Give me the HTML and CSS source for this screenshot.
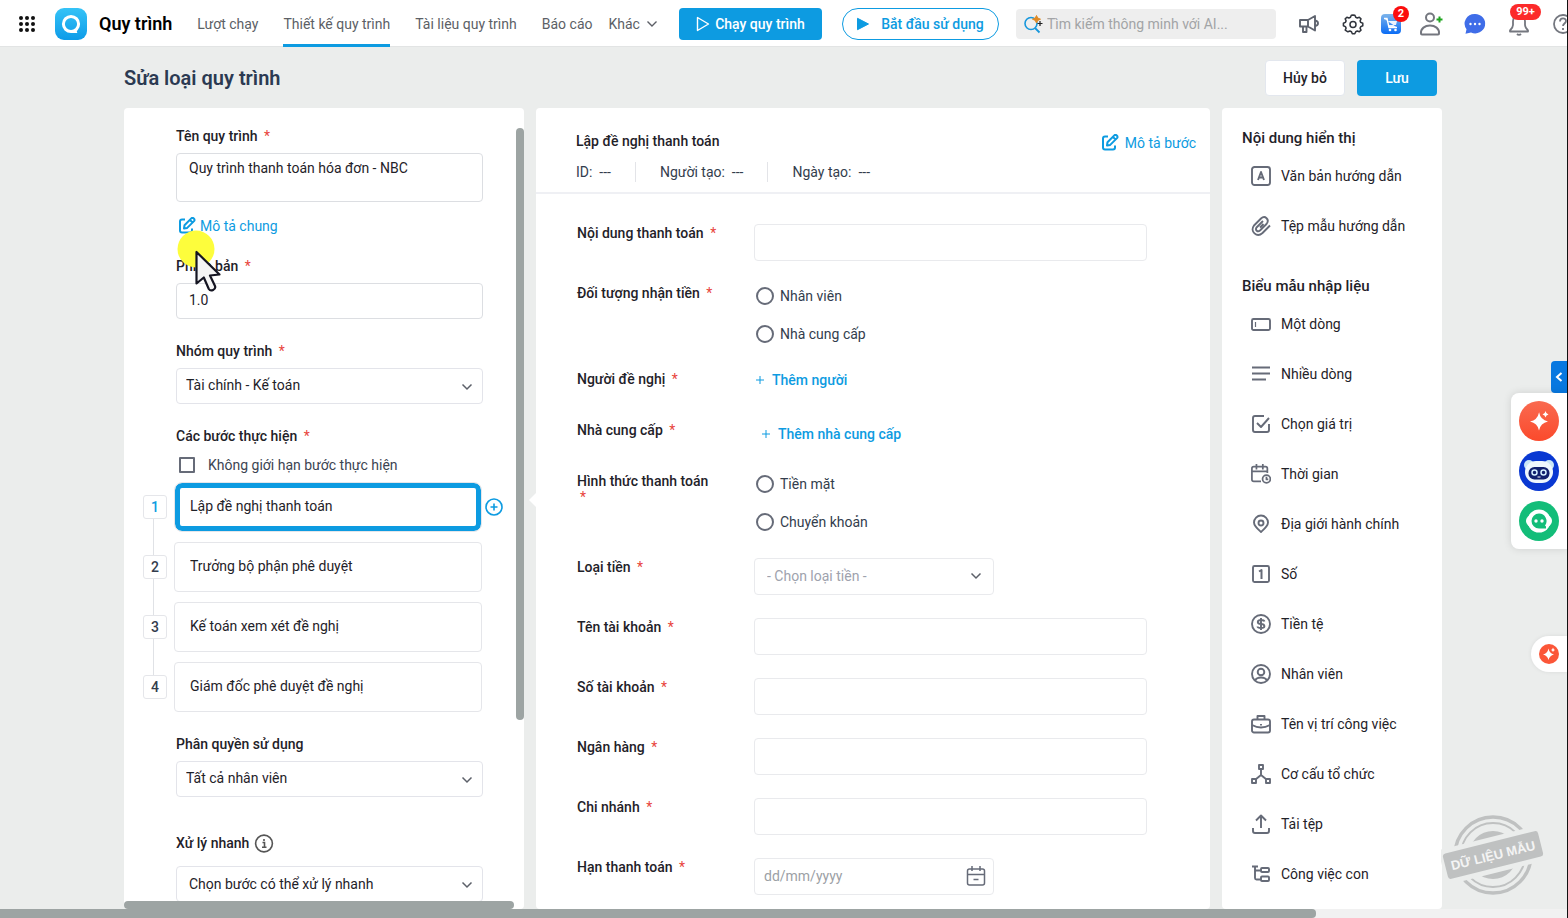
FILE: index.html
```html
<!DOCTYPE html>
<html lang="vi">
  <head>
    <meta charset="UTF-8" />
    <meta name="viewport" content="width=device-width, initial-scale=1.0" />
    <title>Sửa loại quy trình</title>
    <link rel="stylesheet" href="styles.css">
  </head>
  <body>
    <header class="topbar">
      <button type="button" class="icon-btn apps" aria-label="Ứng dụng">
        <svg width="16" height="16" viewBox="0 0 16 16" fill="#111">
          <circle cx="2" cy="2" r="2"/><circle cx="8" cy="2" r="2"/><circle cx="14" cy="2" r="2"/>
          <circle cx="2" cy="8" r="2"/><circle cx="8" cy="8" r="2"/><circle cx="14" cy="8" r="2"/>
          <circle cx="2" cy="14" r="2"/><circle cx="8" cy="14" r="2"/><circle cx="14" cy="14" r="2"/>
        </svg>
      </button>
      <svg class="logo" width="32" height="32" viewBox="0 0 32 32">
        <defs>
          <linearGradient id="logoFill" x1="0" y1="0" x2="0" y2="1">
            <stop offset="0" stop-color="#35c3f7"/><stop offset="1" stop-color="#0d9be8"/>
          </linearGradient>
        </defs>
        <rect width="32" height="32" rx="9" fill="url(#logoFill)"/>
        <circle cx="16" cy="16" r="7.6" fill="none" stroke="#fff" stroke-width="3"/>
        <path d="M16 22.1h5.5l.8 3H16z" fill="#fff"/>
      </svg>
      <span class="app-name">Quy trình</span>
      <nav class="menu">
        <a href="#">Lượt chạy</a>
        <a href="#" class="active">Thiết kế quy trình</a>
        <a href="#">Tài liệu quy trình</a>
        <a href="#">Báo cáo</a>
        <a href="#" class="more">Khác
          <svg width="10" height="6" viewBox="0 0 10 6" fill="none" stroke="currentColor" stroke-width="1.4"><path d="M.5.5 5 5l4.500-4.500"/></svg>
        </a>
      </nav>
      <button type="button" class="btn btn-run">
        <svg width="14" height="16" viewBox="0 0 14 16" fill="none" stroke="#fff" stroke-width="1.400" stroke-linejoin="round"><path d="M1.500 1.500v13L12.500 8z"/></svg>
        Chạy quy trình
      </button>
      <button type="button" class="btn btn-start">
        <svg width="12" height="14" viewBox="0 0 12 14" fill="#0d9be1"><path d="M.5 1.300v11.400L11.500 7z" stroke="#0d9be1" stroke-linejoin="round"/></svg>
        Bắt đầu sử dụng
      </button>
      <label class="search">
        <svg width="20" height="20" viewBox="0 0 20 20" fill="none">
          <circle cx="7" cy="9.500" r="6" stroke="#1797dc" stroke-width="1.600"/>
          <path d="m11 14 4.500 4.500" stroke="#1797dc" stroke-width="1.800"/>
          <path d="M12.500 1.500 13.700 4l2.800 1.200-2.800 1.200-1.200 2.600-1.200-2.600-2.800-1.200L11.300 4z" fill="#e08a24" stroke="#e08a24"/>
          <path d="M16 7v5M13.500 9.500h5" stroke="#222" stroke-width="1.200"/>
        </svg>
        <input type="text" placeholder="Tìm kiếm thông minh với AI..." aria-label="Tìm kiếm" />
      </label>
      <div class="tools">
        <button type="button" class="icon-btn" aria-label="Thông báo mới">
          <svg width="24" height="24" viewBox="0 0 24 24" fill="none" stroke="#5f646f" stroke-width="1.900" stroke-linejoin="round">
            <path d="M3 8h8v6.500H3zM11 8l7-4v14.500l-7-4M18 8.500c4 .5 4 5 0 5.500M6 14.500V20h3.500v-5.500"/>
          </svg>
        </button>
        <button type="button" class="icon-btn" aria-label="Thiết lập">
          <svg width="24" height="24" viewBox="0 0 24 24" fill="none" stroke="#30343c" stroke-width="1.500" stroke-linejoin="round">
            <path d="M12 3l1.900.3.800 2 1.600.7 2-.800 1.700 1.700-.9 2 .6 1.500 2.100.9v2.400l-2 .9-.7 1.500.9 2-1.700 1.700-2-.800-1.600.7-.9 2h-2.500l-.800-2-1.600-.7-2 .800L4.200 18.100l.9-2-.7-1.500-2-.9v-2.400l2-.9.7-1.500-.9-2L5.900 5.200l2 .800 1.600-.7.800-2z"/>
            <circle cx="12" cy="12.500" r="3"/>
          </svg>
        </button>
        <button type="button" class="icon-btn cart" aria-label="Cửa hàng">
          <svg width="20" height="24" viewBox="0 0 20 24">
            <defs>
              <linearGradient id="cartFill" x1="0" y1="0" x2="0" y2="1">
                <stop offset="0" stop-color="#7db4ea"/><stop offset="1" stop-color="#0a6cf5"/>
              </linearGradient>
            </defs>
            <rect y="2" width="20" height="20" rx="4" fill="url(#cartFill)"/>
            <path d="M3 7h3l2.500 9H16z" fill="none"/>
            <path d="M3 6.500h3L8 15.500h8M6.500 9H16l-1 4H7.500z" fill="#fff" fill-opacity=".9" stroke="none"/>
            <path d="M3 6.500h3l2 9h8" fill="none" stroke="#fff" stroke-width="1.400"/>
            <circle cx="9" cy="18" r="1.300" fill="#fff"/><circle cx="14.500" cy="18" r="1.300" fill="#fff"/>
          </svg>
          <span class="badge">2</span>
        </button>
        <button type="button" class="icon-btn" aria-label="Mời người dùng">
          <svg width="24" height="24" viewBox="0 0 24 24" fill="none" stroke="#74777f" stroke-width="2">
            <circle cx="11" cy="5.500" r="4"/>
            <path d="M2 21.500c-.500-5 4-8 9-8s9.500 3 9 8c0 .6-.500 1-1 1H3c-.600 0-1-.4-1-1z"/>
            <path d="M20.500 4.500v6M17.500 7.500h6" stroke="#1ea51e"/>
          </svg>
        </button>
        <button type="button" class="icon-btn" aria-label="Trò chuyện">
          <svg width="24" height="24" viewBox="0 0 24 24">
            <path d="M12 2a10 9.700 0 1 1-4 18.500l-5.500 1.300 1-4.500A10 9.700 0 0 1 12 2z" fill="#3f6de8"/>
            <circle cx="7.500" cy="12" r="1.200" fill="#fff"/><circle cx="12" cy="12" r="1.200" fill="#fff"/><circle cx="16.500" cy="12" r="1.200" fill="#fff"/>
          </svg>
        </button>
        <button type="button" class="icon-btn" aria-label="Thông báo">
          <svg width="24" height="24" viewBox="0 0 24 24" fill="none" stroke="#74777f" stroke-width="1.800" stroke-linejoin="round">
            <path d="M6 13V9a6 6 0 0 1 12 0v4c0 2 1 3.500 3 5.500v1H3v-1c2-2 3-3.500 3-5.500z"/>
            <path d="M10 22c1 1 3 1 4 0"/>
          </svg>
          <span class="badge badge-wide">99+</span>
        </button>
        <button type="button" class="icon-btn" aria-label="Trợ giúp">
          <svg width="24" height="24" viewBox="0 0 24 24" fill="none" stroke="#74777f" stroke-width="1.800">
            <circle cx="12" cy="12" r="9"/>
            <path d="M9 9.500c0-4 6-4 6-.5 0 2.500-3 2.500-3 5M12 16v2"/>
          </svg>
        </button>
      </div>
    </header>

    <main class="page">
      <div class="page-head">
        <h1>Sửa loại quy trình</h1>
        <button type="button" class="btn btn-cancel">Hủy bỏ</button>
        <button type="button" class="btn btn-save">Lưu</button>
      </div>

      <div class="columns">
        <section class="panel settings">
          <div class="settings-view">
            <form class="settings-form">
              <label class="field-label" for="processName">Tên quy trình <i>*</i></label>
              <textarea id="processName" class="control control-tall">Quy trình thanh toán hóa đơn - NBC</textarea>
              <a href="#" class="edit-link">
                <svg width="18" height="18" viewBox="0 0 18 18" fill="none" stroke="currentColor" stroke-width="2" stroke-linejoin="round"><path d="M7 2.500H4C2.500 2.500 2 3 2 4.500v9c0 1.500.5 2 2 2h8c1.500 0 2-.5 2-2v-2M6.500 8.200l6.800-6.800c1.500-1.500 4.200 1 2.700 2.700l-6.800 6.800-3.200.6zM12 3 14.500 5.500"/></svg>
                Mô tả chung
              </a>
              <label class="field-label" for="processVersion">Phiên bản <i>*</i></label>
              <input type="text" id="processVersion" class="control" value="1.0" />

              <label class="field-label" for="processGroup">Nhóm quy trình <i>*</i></label>
              <div class="select-box">
                <select id="processGroup" class="control"><option>Tài chính - Kế toán</option></select>
                <svg width="12" height="8" viewBox="0 0 12 8"><path d="m1.500 1.500 4.500 4.500 4.500-4.500"/></svg>
              </div>

              <h2 class="field-label steps-label">Các bước thực hiện <i>*</i></h2>
              <label class="check"><input type="checkbox" /> Không giới hạn bước thực hiện</label>
              <ol class="steps">
                <li class="current">
                  <span class="step-num">1</span>
                  <input type="text" class="step-name" value="Lập đề nghị thanh toán" aria-label="Bước 1" />
                  <button type="button" class="icon-btn" aria-label="Thêm bước">
                    <svg width="18" height="18" viewBox="0 0 18 18" fill="none" stroke="#0d9be1" stroke-width="1.600"><circle cx="9" cy="9" r="8"/><path d="M9 5.500v7M5.500 9h7"/></svg>
                  </button>
                </li>
                <li><span class="step-num">2</span><input type="text" class="step-name" value="Trưởng bộ phận phê duyệt" aria-label="Bước 2" /></li>
                <li><span class="step-num">3</span><input type="text" class="step-name" value="Kế toán xem xét đề nghị" aria-label="Bước 3" /></li>
                <li><span class="step-num">4</span><input type="text" class="step-name" value="Giám đốc phê duyệt đề nghị" aria-label="Bước 4" /></li>
              </ol>

              <label class="field-label" for="permission">Phân quyền sử dụng</label>
              <div class="select-box">
                <select id="permission" class="control"><option>Tất cả nhân viên</option></select>
                <svg width="12" height="8" viewBox="0 0 12 8"><path d="m1.500 1.500 4.500 4.500 4.500-4.500"/></svg>
              </div>

              <label class="field-label quick-label" for="quick">Xử lý nhanh
                <svg width="20" height="20" viewBox="0 0 20 20" fill="none" stroke="#555" stroke-width="1.600"><circle cx="10" cy="10.500" r="8.400"/><path d="M8.500 9.500h2v4.500M8 14.200h4.500M10 6v2"/></svg>
              </label>
              <div class="select-box">
                <select id="quick" class="control control-wide"><option>Chọn bước có thể xử lý nhanh</option></select>
                <svg width="12" height="8" viewBox="0 0 12 8"><path d="m1.500 1.500 4.500 4.500 4.500-4.500"/></svg>
              </div>
            </form>
            <div class="bar-y"><div class="bar-y-thumb"></div></div>
          </div>
          <div class="bar-x"><div class="bar-x-thumb"></div></div>

          <svg class="pointer" width="48" height="64" viewBox="0 0 48 64">
            <circle cx="19" cy="19" r="18.500" fill="#fdfd3c"/>
            <path d="M19.500 22v31.500l7.300-6 5 11.500c2 3 7.500.5 6.200-3l-5-10.500 9.500-1z" fill="#f5f5f5" stroke="#151522" stroke-width="2.200" stroke-linejoin="round"/>
          </svg>
        </section>

        <section class="panel preview">
          <div class="preview-head">
            <div>
              <h2>Lập đề nghị thanh toán</h2>
              <p class="meta"><span>ID:&nbsp; ---</span><span>Người tạo:&nbsp; ---</span><span>Ngày tạo:&nbsp; ---</span></p>
            </div>
            <a href="#" class="edit-link">
              <svg width="18" height="18" viewBox="0 0 18 18" fill="none" stroke="currentColor" stroke-width="2" stroke-linejoin="round"><path d="M7 2.500H4C2.500 2.500 2 3 2 4.500v9c0 1.500.5 2 2 2h8c1.500 0 2-.5 2-2v-2M6.500 8.200l6.800-6.800c1.500-1.500 4.200 1 2.700 2.700l-6.800 6.800-3.200.6zM12 3 14.500 5.500"/></svg>
              Mô tả bước
            </a>
          </div>
          <form class="preview-form">
            <div class="row">
              <label for="content">Nội dung thanh toán <i>*</i></label>
              <input type="text" id="content" class="control" />
            </div>
            <div class="row row-radio" role="radiogroup" aria-labelledby="receiver">
              <span class="row-label" id="receiver">Đối tượng nhận tiền <i>*</i></span>
              <div class="radios">
                <label><input type="radio" name="receiver" /> Nhân viên</label>
                <label><input type="radio" name="receiver" /> Nhà cung cấp</label>
              </div>
            </div>
            <div class="row row-add">
              <span class="row-label">Người đề nghị <i>*</i></span>
              <button type="button" class="add-btn">
                <svg width="8" height="8" viewBox="0 0 8 8" stroke="currentColor"><path d="M4 0v8M0 4h8"/></svg>
                Thêm người
              </button>
            </div>
            <div class="row row-add">
              <span class="row-label">Nhà cung cấp <i>*</i></span>
              <button type="button" class="add-btn add-supplier">
                <svg width="8" height="8" viewBox="0 0 8 8" stroke="currentColor"><path d="M4 0v8M0 4h8"/></svg>
                Thêm nhà cung cấp
              </button>
            </div>
            <div class="row row-radio" role="radiogroup" aria-labelledby="method">
              <span class="row-label" id="method">Hình thức thanh toán <i>*</i></span>
              <div class="radios">
                <label><input type="radio" name="method" /> Tiền mặt</label>
                <label><input type="radio" name="method" /> Chuyển khoản</label>
              </div>
            </div>
            <div class="row">
              <label for="currency">Loại tiền <i>*</i></label>
              <div class="select-box short">
                <select id="currency" class="control hint"><option>- Chọn loại tiền -</option></select>
                <svg width="12" height="8" viewBox="0 0 12 8"><path d="m1.500 1.500 4.500 4.500 4.500-4.500"/></svg>
              </div>
            </div>
            <div class="row">
              <label for="accountName">Tên tài khoản <i>*</i></label>
              <input type="text" id="accountName" class="control" />
            </div>
            <div class="row">
              <label for="accountNumber">Số tài khoản <i>*</i></label>
              <input type="text" id="accountNumber" class="control" />
            </div>
            <div class="row">
              <label for="bank">Ngân hàng <i>*</i></label>
              <input type="text" id="bank" class="control" />
            </div>
            <div class="row">
              <label for="branch">Chi nhánh <i>*</i></label>
              <input type="text" id="branch" class="control" />
            </div>
            <div class="row">
              <label for="dueDate">Hạn thanh toán <i>*</i></label>
              <div class="date-box short">
                <input type="text" id="dueDate" class="control" placeholder="dd/mm/yyyy" />
                <svg width="20" height="20" viewBox="0 0 20 20" fill="none" stroke="#666b78" stroke-width="1.500"><rect x="1.500" y="3" width="17" height="16" rx="2"/><path d="M1.500 8.500h17M6 0v5M14 0v5M7.500 13.500h5"/></svg>
              </div>
            </div>
          </form>
        </section>

        <aside class="panel toolbox">
          <h3>Nội dung hiển thị</h3>
          <ul>
            <li>
              <svg viewBox="0 0 20 20"><rect x="1" y="1" width="18" height="18" rx="2.500"/><path d="M7 14l3-8 3 8M8 11.500h4"/></svg>
              Văn bản hướng dẫn
            </li>
            <li>
              <svg viewBox="0 0 20 20"><path d="M19 9.500 11.500 17c-5.500 5-13-1.500-8.500-7.500L10 2.500c4-3.500 9 1 5.500 5.500l-6.500 6.500c-2.500 2-5-.5-3.500-3L12 5M12.500 8 9 11.500"/></svg>
              Tệp mẫu hướng dẫn
            </li>
          </ul>
          <h3>Biểu mẫu nhập liệu</h3>
          <ul>
            <li>
              <svg viewBox="0 0 20 20"><rect x="1" y="5" width="18" height="11" rx="1.500"/><path d="M4.500 8v5" stroke-width="1.200"/></svg>
              Một dòng
            </li>
            <li>
              <svg viewBox="0 0 20 20"><path d="M1 3.500h18M1 9.500h18M1 15.500h14"/></svg>
              Nhiều dòng
            </li>
            <li>
              <svg viewBox="0 0 20 20"><path d="M13 2H4Q2 2 2 4v12q0 2 2 2h12q2 0 2-2v-6M6 9l4 4 8-9"/></svg>
              Chọn giá trị
            </li>
            <li>
              <svg viewBox="0 0 22 22"><path d="M11 19H3q-2 0-2-2V5q0-2 2-2h13q2 0 2 2v5M1 8h17M6 0v6M13 0v6"/><circle cx="17" cy="16.500" r="4.300"/><path d="M17 14v3h2"/></svg>
              Thời gian
            </li>
            <li>
              <svg viewBox="0 0 20 20"><path d="M10 18C6 14.500 3 12 3 8.500a7 7 0 0 1 14 0C17 12 14 14.500 10 18z"/><circle cx="10" cy="9" r="2.500"/></svg>
              Địa giới hành chính
            </li>
            <li>
              <svg viewBox="0 0 20 20"><rect x="2" y="2" width="16" height="16" rx="1.500"/><path d="M8 7.500 10.500 6v9" stroke-width="2"/></svg>
              Số
            </li>
            <li>
              <svg viewBox="0 0 20 20"><circle cx="10" cy="10" r="9"/><path d="M13.500 7.500Q13 6 10 6T6.800 8q0 2 3.200 2t3.400 2.200Q13.400 14 10 14t-3.500-1.500M10 4v12"/></svg>
              Tiền tệ
            </li>
            <li>
              <svg viewBox="0 0 20 20"><circle cx="10" cy="10" r="9"/><circle cx="10" cy="8" r="3.300"/><path d="M4 16.500c2-4 10-4 12 0"/></svg>
              Nhân viên
            </li>
            <li>
              <svg viewBox="0 0 20 20"><rect x="1" y="5.500" width="18" height="13" rx="2"/><path d="M6.500 5V2h7v3M1 11q9 5 18 0M10 10v1.500"/></svg>
              Tên vị trí công việc
            </li>
            <li>
              <svg viewBox="0 0 20 20"><rect x="8" y="1" width="4" height="4"/><rect x="1" y="15" width="4" height="4"/><rect x="15" y="15" width="4" height="4"/><path d="M10 5v6l-5.500 4.500M10 11l5.500 4.500"/></svg>
              Cơ cấu tổ chức
            </li>
            <li>
              <svg viewBox="0 0 20 20"><path d="M10 14V1.500M5 6.500l5-5 5 5M2 14v3q0 2 2 2h12q2 0 2-2v-3"/></svg>
              Tải tệp
            </li>
            <li>
              <svg viewBox="0 0 20 20"><path d="M1 2.500h6M4 2.500V14q0 1.500 1.500 1.500H10M4 6.500h6"/><rect x="10" y="4" width="8" height="4" rx="1"/><rect x="10" y="12.500" width="8" height="4.500" rx="1"/></svg>
              Công việc con
            </li>
          </ul>
        </aside>
      </div>
    </main>

    <div class="page-bar"><div class="page-bar-thumb"></div></div>

    <svg class="stamp" width="104" height="84" viewBox="0 0 104 84">
      <g fill="none" stroke="#bfc1c1">
        <circle cx="52" cy="42" r="38" stroke-width="3.500"/>
        <circle cx="52" cy="42" r="32" stroke-width="2"/>
      </g>
      <circle cx="52" cy="42" r="24" fill="#bfc1c1"/>
      <g transform="rotate(-14 52 42)">
        <rect x="0" y="24" width="104" height="36" fill="#ebedec"/>
        <rect x="3" y="29" width="98" height="26" rx="3" fill="#bfc1c1"/>
        <text x="52" y="47" text-anchor="middle">DỮ LIỆU MẪU</text>
      </g>
    </svg>

    <div class="dock">
      <button type="button" class="dock-toggle" aria-label="Thu gọn">
        <svg width="8" height="10" viewBox="0 0 8 10" fill="none" stroke="#fff" stroke-width="2"><path d="M6.500 1 2 5l4.500 4"/></svg>
      </button>
      <div class="dock-list">
        <button type="button" class="icon-btn" aria-label="Trợ lý AI">
          <svg width="40" height="40" viewBox="0 0 40 40">
            <defs>
              <linearGradient id="aiFill" x1="0" y1="0" x2="0" y2="1">
                <stop offset="0" stop-color="#f96a50"/><stop offset="1" stop-color="#fb4a2c"/>
              </linearGradient>
            </defs>
            <circle cx="20" cy="20" r="20" fill="url(#aiFill)"/>
            <path d="M20 11q1.500 8 9 9.500-7.500 1.500-9 9-1.500-7.500-9-9 7.500-1.500 9-9zM26.500 10q.5 3 3 3.500-2.500.500-3 3-.5-2.500-3-3 2.500-.5 3-3.500z" fill="#fff"/>
          </svg>
        </button>
        <button type="button" class="icon-btn" aria-label="Trợ lý số">
          <svg width="40" height="40" viewBox="0 0 40 40">
            <circle cx="20" cy="20" r="20" fill="#0938d2"/>
            <circle cx="10" cy="14" r="5" fill="#c9e6f7"/><circle cx="30" cy="14" r="5" fill="#c9e6f7"/>
            <rect x="6" y="10" width="28" height="22" rx="11" fill="#eef7fd"/>
            <rect x="9.500" y="16" width="21" height="12.500" rx="6" fill="#10206e"/>
            <circle cx="15.500" cy="21.500" r="2.500" fill="none" stroke="#d5efff" stroke-width="1.500"/><circle cx="24.500" cy="21.500" r="2.500" fill="none" stroke="#d5efff" stroke-width="1.500"/>
            <path d="M18.500 26h3" stroke="#fff"/>
          </svg>
        </button>
        <button type="button" class="icon-btn" aria-label="Hỗ trợ">
          <svg width="40" height="40" viewBox="0 0 40 40">
            <circle cx="20" cy="20" r="20" fill="#13bd79"/>
            <ellipse cx="20" cy="20" rx="13" ry="8" fill="#fff"/><circle cx="20" cy="20" r="11.500" fill="#fff"/>
            <path d="M20 12.500a7.500 7.500 0 1 0 0 15h7v-2l-1-1a7.500 7.500 0 0 0-6-12z" fill="#13bd79"/>
            <circle cx="17" cy="20" r="1.700" fill="#fff"/><circle cx="23" cy="20" r="1.700" fill="#fff"/>
          </svg>
        </button>
      </div>
    </div>
    <button type="button" class="mini-ai" aria-label="Mở trợ lý AI">
      <svg width="20" height="20" viewBox="0 0 40 40">
        <circle cx="20" cy="20" r="20" fill="#fb5638"/>
        <path d="M19 9q2 10 11 12-9 2-11 11-2-9-11-11 9-2 11-12zM28 7q1 4 4 5-3 1-4 4-1-3-4-4 3-1 4-5z" fill="#fff"/>
      </svg>
    </button>
  </body>
</html>
```

FILE: styles.css
```css
* {
  box-sizing: border-box;
}
body {
  position: relative;
  display: flex;
  flex-direction: column;
  height: 100vh;
  margin: 0;
  overflow: hidden;
  background-color: #ebedec;
  border-right: 1px solid #111;
  color: #1f2229;
  font-family: Roboto, sans-serif;
  font-size: 14px;
  line-height: 20px;
}
h1,
h2,
h3,
p,
ul,
ol {
  margin: 0;
  padding: 0;
}
li {
  list-style: none;
}
a {
  color: #0d9be1;
  text-decoration: none;
}
i {
  margin-left: 3px;
  color: #e8443c;
  font-style: normal;
  font-weight: 400;
}
svg {
  display: block;
  flex: none;
}
button,
input,
select,
textarea {
  font: inherit;
  color: inherit;
}
.icon-btn {
  position: relative;
  flex: none;
  padding: 0;
  border: none;
  background: none;
  cursor: pointer;
}
.icon-btn svg {
  overflow: visible;
}

/* top bar */
.topbar {
  display: flex;
  flex: none;
  align-items: center;
  height: 47px;
  padding: 1px 0 0 19px;
  overflow: hidden;
  background-color: #fff;
  box-shadow: inset 0 -1px 0 #e2e4e4;
  white-space: nowrap;
}
.logo {
  margin: 0 12px 0 20px;
}
.app-name {
  color: #000;
  font-size: 18px;
  font-weight: 600;
}
.menu {
  display: flex;
  align-self: stretch;
  gap: 25px;
  margin-left: 25px;
}
.menu a {
  display: flex;
  align-items: center;
  color: #5c5f66;
  border-top: 3px solid transparent;
  border-bottom: 3px solid transparent;
}
.menu .active {
  border-bottom-color: #0d9be1;
}
.menu .more {
  gap: 7px;
  margin-left: -9px;
}
.btn {
  display: flex;
  flex: none;
  align-items: center;
  justify-content: center;
  border-radius: 4px;
  font-weight: 500;
  cursor: pointer;
}
.btn-run {
  gap: 5px;
  width: 143px;
  height: 32px;
  margin-left: 22px;
  padding: 0;
  background-color: #0d9be1;
  border: none;
  color: #fff;
}
.btn-start {
  gap: 12px;
  width: 157px;
  height: 32px;
  margin-left: 20px;
  padding: 0;
  background-color: #fff;
  border: 1px solid #0d9be1;
  border-radius: 16px;
  color: #0d9be1;
}
.search {
  display: flex;
  flex: none;
  align-items: center;
  gap: 3px;
  width: 260px;
  height: 30px;
  margin-left: 17px;
  padding-left: 8px;
  background-color: #eee;
  border-radius: 4px;
}
.search input {
  flex: 1;
  min-width: 0;
  padding: 0;
  border: none;
  background: none;
}
.search input::placeholder {
  color: #a2a4a6;
}
.tools {
  display: flex;
  flex: none;
  gap: 20px;
  margin-left: 21px;
}
.tools .cart {
  margin: 0 -2px 0 -4px;
}
.badge {
  position: absolute;
  top: -6px;
  left: 12px;
  min-width: 16px;
  height: 16px;
  background-color: #fb0d0d;
  border-radius: 8px;
  color: #fff;
  font-size: 11px;
  font-weight: 700;
  line-height: 16px;
  text-align: center;
}
.badge-wide {
  top: -8px;
  left: 3px;
  width: 31px;
  background-color: #fc2a2a;
}

/* page */
.page {
  display: flex;
  flex: 1;
  flex-direction: column;
  min-height: 0;
  padding: 0 125px 0 124px;
}
.page-head {
  display: flex;
  flex: none;
  align-items: center;
  gap: 12px;
  height: 61px;
  padding-right: 5px;
}
.page-head h1 {
  flex: 1;
  color: #2b3a52;
  font-size: 20px;
  font-weight: 600;
}
.btn-cancel {
  width: 80px;
  height: 36px;
  background-color: #fff;
  border: 1px solid #e3e7ee;
}
.btn-save {
  width: 80px;
  height: 36px;
  background-color: #0d9be1;
  border: none;
  color: #fff;
}
.columns {
  display: grid;
  flex: 1;
  grid-template-rows: minmax(0, 1fr);
  grid-template-columns: 400px 1fr 220px;
  gap: 12px;
  min-height: 0;
}
.panel {
  position: relative;
  min-width: 0;
  background-color: #fff;
  border-radius: 4px;
}

/* controls */
.control {
  display: block;
  width: 100%;
  height: 36px;
  padding: 0 12px 2px;
  background-color: #fff;
  border: 1px solid #dcdee2;
  border-radius: 4px;
  outline: none;
}
.control-tall {
  height: 49px;
  padding-top: 4px;
  resize: none;
}
.control::placeholder {
  color: #9c9fa5;
}
.select-box,
.date-box {
  position: relative;
}
.select-box select {
  padding: 0 9px 2px;
  border-color: #e3e4ea;
  appearance: none;
}
.select-box .control-wide {
  padding: 0 12px;
}
.select-box svg {
  position: absolute;
  top: 15px;
  right: 10px;
  fill: none;
  stroke: #5c6069;
  stroke-width: 1.5;
  pointer-events: none;
}
.edit-link {
  display: flex;
  align-items: center;
  gap: 4px;
}

/* left panel */
.settings {
  display: flex;
  flex-direction: column;
}
.settings-view {
  display: flex;
  flex: 1;
  min-height: 0;
}
.settings-form {
  flex: 1;
  min-width: 0;
  padding: 18px 33px 0 52px;
  overflow: hidden;
}
.field-label {
  display: block;
  margin-bottom: 7px;
  font-size: 14px;
  font-weight: 500;
}
.control + .field-label,
.select-box + .field-label,
.steps + .field-label {
  margin-top: 22px;
}
.settings .edit-link {
  margin: 14px 0 20px 2px;
}
.settings .steps-label {
  margin-bottom: 9px;
}
.settings .quick-label {
  display: flex;
  gap: 5px;
  align-items: center;
  margin: 36px 0 13px;
}
.check {
  display: flex;
  align-items: center;
  gap: 13px;
  margin: 0 0 7px 3px;
  color: #3c4452;
}
.check input {
  width: 16px;
  height: 16px;
  margin: 0;
  border: 2px solid #666b78;
  border-radius: 1px;
  appearance: none;
}
.steps {
  display: grid;
  gap: 10px;
  margin: 0 -20px 0 -33px;
}
.steps li {
  position: relative;
  display: grid;
  grid-template-columns: 31px 1fr 21px;
  align-items: center;
}
.step-num {
  width: 24px;
  height: 24px;
  background-color: #fff;
  border: 1px solid #e5e6ea;
  border-radius: 3px;
  color: #333d4d;
  font-weight: 500;
  line-height: 22px;
  text-align: center;
}
.step-num::after {
  position: absolute;
  top: 37px;
  left: 10px;
  width: 1px;
  height: 36px;
  background-color: #e0e2e6;
  content: "";
}
.steps li:last-child .step-num::after {
  display: none;
}
.step-name {
  width: 100%;
  height: 50px;
  padding: 0 15px 2px;
  background-color: #fff;
  border: 1px solid #e5e6ea;
  border-radius: 4px;
  outline: none;
}
.current .step-num {
  color: #0d9be1;
}
.current .step-name {
  border-radius: 8px;
  box-shadow: inset 0 0 0 5px #0d9be1;
}
.current .icon-btn {
  justify-self: end;
}
.bar-y {
  width: 8px;
  padding-top: 20px;
}
.bar-y-thumb {
  height: 592px;
  background-color: #9da4a3;
  border-radius: 4px;
}
.bar-x {
  flex: none;
  height: 8px;
}
.bar-x-thumb {
  width: 390px;
  height: 8px;
  background-color: #9da4a3;
  border-radius: 4px;
}
.pointer {
  position: absolute;
  top: 122px;
  left: 53px;
  pointer-events: none;
}

/* middle panel */
.preview::before {
  position: absolute;
  top: 385px;
  left: -7px;
  border: 7px solid transparent;
  border-right-color: #fff;
  border-left: none;
  content: "";
}
.preview-head {
  display: flex;
  justify-content: space-between;
  height: 86px;
  padding: 23px 14px 0 40px;
  border-bottom: 2px solid #eff0f4;
}
.preview-head h2 {
  font-size: 14px;
  font-weight: 500;
}
.preview-head .edit-link {
  align-self: flex-start;
  gap: 6px;
  margin-top: 2px;
}
.meta {
  display: flex;
  margin-top: 11px;
  color: #333d4d;
}
.meta span + span {
  margin-left: 24px;
  padding-left: 24px;
  border-left: 1px solid #e3e4e8;
}
.preview-form {
  height: 715px;
  padding: 29px 63px 0 41px;
  overflow: hidden;
}
.row {
  display: grid;
  grid-template-columns: 143px 1fr;
  align-items: start;
  column-gap: 34px;
  height: 60px;
}
.row > label,
.row-label {
  padding-top: 2px;
  font-weight: 500;
  line-height: 16px;
}
.row .control {
  height: 37px;
  margin-top: 1px;
  border-color: #e9eaed;
}
.row-radio {
  height: 86px;
}
.row-add {
  height: 51px;
}
.radios {
  display: grid;
  gap: 18px;
  padding: 3px 0 0 2px;
}
.radios label {
  display: flex;
  align-items: center;
  gap: 6px;
  color: #333d4d;
}
.radios input {
  width: 18px;
  height: 18px;
  margin: 0;
  border: 2px solid #666b78;
  border-radius: 50%;
  appearance: none;
}
.add-btn {
  display: flex;
  align-items: center;
  gap: 8px;
  margin-top: 1px;
  padding: 0 2px;
  border: none;
  background: none;
  color: #0d9be1;
  font-weight: 500;
  cursor: pointer;
}
.add-supplier {
  margin-top: 4px;
  padding: 0 8px;
}
.short {
  width: 240px;
}
.row .hint {
  padding-left: 12px;
  color: #9ea2ad;
}
.row .select-box svg {
  right: 12px;
}
.date-box .control {
  padding-left: 9px;
}
.date-box svg {
  position: absolute;
  top: 9px;
  right: 8px;
}

/* right panel */
.toolbox {
  padding: 20px 20px 0;
  overflow: hidden;
}
.toolbox h3 {
  margin-bottom: 3px;
  font-size: 15px;
  font-weight: 500;
}
.toolbox ul + h3 {
  margin-top: 25px;
}
.toolbox li {
  display: flex;
  align-items: center;
  gap: 10px;
  height: 50px;
  padding-left: 9px;
}
.toolbox li svg {
  width: 20px;
  height: 20px;
  fill: none;
  stroke: #666b78;
  stroke-width: 1.9;
  stroke-linejoin: round;
}

/* page scroll bar */
.page-bar {
  flex: none;
  height: 9px;
  background-color: #f1f1f1;
}
.page-bar-thumb {
  width: 84%;
  height: 9px;
  background-color: #9da4a3;
  border-radius: 0 4px 4px 0;
}

/* floating items */
.stamp {
  position: absolute;
  right: 22px;
  bottom: 21px;
}
.stamp text {
  fill: #f4f4f4;
  font-family: "Liberation Sans", sans-serif;
  font-size: 13px;
  font-weight: 700;
}
.dock {
  position: absolute;
  top: 361px;
  right: 0;
  display: flex;
  flex-direction: column;
  align-items: flex-end;
}
.dock-toggle {
  width: 16px;
  height: 32px;
  padding: 0 0 0 4px;
  background-color: #0878e0;
  border: none;
  border-radius: 4px 0 0 4px;
}
.dock-list {
  display: grid;
  gap: 10px;
  padding: 8px;
  background-color: #fff;
  border-radius: 8px 0 0 8px;
  box-shadow: 0 0 8px rgba(0, 0, 0, 0.12);
}
.mini-ai {
  position: absolute;
  top: 636px;
  right: 0;
  padding: 8px;
  background-color: #fff;
  border: none;
  border-radius: 18px 0 0 18px;
  box-shadow: 0 0 4px rgba(0, 0, 0, 0.08);
}
```
